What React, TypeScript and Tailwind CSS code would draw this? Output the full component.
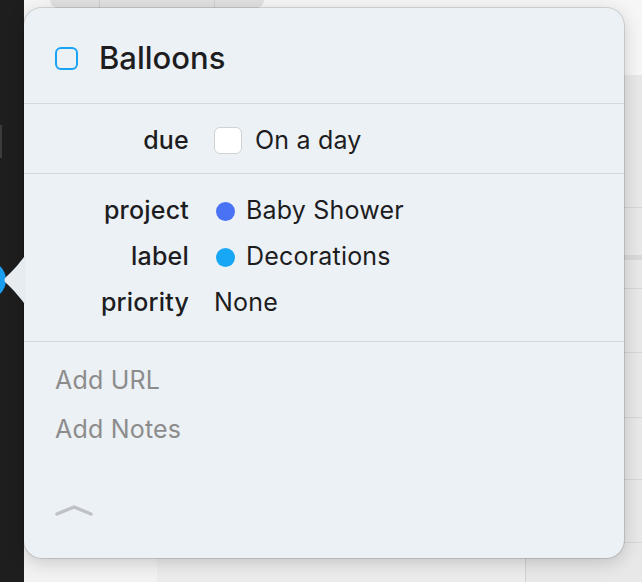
import React from "react";

const font = { fontFamily: "Inter, 'Liberation Sans', sans-serif" };

function Row({ label, children }: { label: string; children: React.ReactNode }) {
  return (
    <div className="flex h-[46px] items-center">
      <div className="w-[165px] text-right text-[25px] font-medium tracking-[0.2px] text-[#1d1d1f]">{label}</div>
      <div className="flex items-center pl-[25px] text-[25px] tracking-[0.2px] text-[#1d1d1f]">{children}</div>
    </div>
  );
}

export default function App() {
  return (
    <div className="relative flex h-[582px] w-[642px] overflow-hidden bg-[#f4f4f4]" style={font}>
      {/* sidebar strip behind */}
      <div className="relative w-[24px] shrink-0 bg-[#1e1e1e]">
        <div className="absolute left-0 top-[125px] h-[33px] w-[2px] bg-[#3c3c3c]" />
        <div className="absolute left-[-32px] top-[261px] h-[38px] w-[38px] rounded-full bg-[#1a9ff0]" />
      </div>

      {/* window content behind */}
      <div className="flex flex-1 flex-col">
        <div className="flex h-[75px] bg-[#f6f6f6]">
          <div className="ml-[26px] flex h-[8px] w-[214px] rounded-b-[10px] bg-[#e1e1e1]">
            <div className="w-[50px] border-r border-[#cfcfcf]" />
            <div className="w-[115px] border-r border-[#cfcfcf]" />
          </div>
        </div>
        <div className="flex flex-1 flex-col bg-[#e8e8e8]">
          <div className="h-[133px] border-b border-[#d6d6d6]" />
          <div className="h-[52px] border-b-[5px] border-[#d9d9d9]" />
          <div className="h-[29px] border-b border-[#d6d6d6]" />
          <div className="h-[64px] border-b border-[#d6d6d6]" />
          <div className="h-[65px] border-b border-[#d6d6d6]" />
          <div className="h-[62px] border-b border-[#d6d6d6]" />
          <div className="h-[63px] border-b border-[#d6d6d6]" />
          <div className="flex flex-1">
            <div className="w-[133px] bg-[#f2f2f2]" />
            <div className="w-[369px] border-r border-[#d2d2d2] bg-[#ececec]" />
            <div className="flex-1" />
          </div>
        </div>
      </div>

      {/* popover */}
      <div className="absolute left-[24px] top-[8px] flex h-[550px] w-[600px] flex-col rounded-[18px] bg-[#ecf1f5] shadow-[0_4px_18px_rgba(0,0,0,0.18),0_0_0_1px_rgba(0,0,0,0.12)]">
        <svg className="absolute left-[-22px] top-[246px]" width="24" height="52" viewBox="0 0 24 52">
          <path d="M24 0 C 20 6, 12 16, 4 23 Q 1 26, 4 29 C 12 36, 20 46, 24 52 Z" fill="#e6ecf0" />
        </svg>

        <div className="flex h-[95px] items-center pl-[31px] pt-[6px]">
          <div className="h-[23px] w-[23px] rounded-[6px] border-2 border-[#1aa2f4]" />
          <div className="pl-[21px] text-[31px] font-medium text-[#1d1d1f]">Balloons</div>
        </div>

        <div className="flex h-[70px] flex-col justify-center border-t border-[#d3d9de] pt-[4px]">
          <Row label="due">
            <div className="mr-[13px] h-[27px] w-[28px] rounded-[6px] border border-[#cfd3d6] bg-white" />
            On a day
          </Row>
        </div>

        <div className="flex h-[168px] flex-col border-t border-[#d3d9de] pt-[14px]">
          <Row label="project">
            <span className="ml-[2px] mr-[11px] h-[19px] w-[19px] rounded-full bg-[#4a72f5]" />
            Baby Shower
          </Row>
          <Row label="label">
            <span className="ml-[2px] mr-[11px] h-[19px] w-[19px] rounded-full bg-[#18a7f5]" />
            Decorations
          </Row>
          <Row label="priority">None</Row>
        </div>

        <div className="flex flex-1 flex-col border-t border-[#d3d9de] pl-[31px] pt-[21px] text-[25px] tracking-[0.2px] text-[#8c8c8c]">
          <div className="h-[49px] leading-[34px]">Add URL</div>
          <div className="h-[49px] leading-[34px]">Add Notes</div>
          <svg className="mt-[42px]" width="38" height="14" viewBox="0 0 38 14">
            <polyline points="2,11 19,4 36,11" fill="none" stroke="#bec2c6" strokeWidth="3.5" strokeLinecap="round" strokeLinejoin="round" />
          </svg>
        </div>
      </div>
    </div>
  );
}
